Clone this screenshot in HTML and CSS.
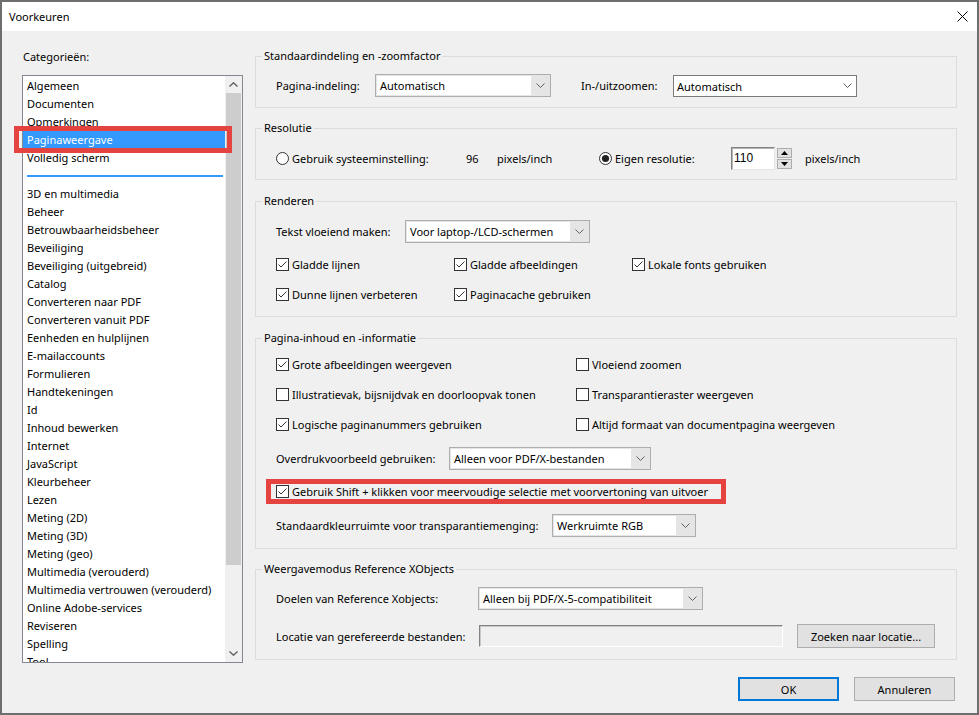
FILE: index.html
```html
<!DOCTYPE html>
<html lang="nl">
<head>
  <meta charset="UTF-8">
  <title>Voorkeuren</title>
  <link rel="stylesheet" href="styles.css">
</head>
<body>
  <div class="window">
    <div class="titlebar">
      <span>Voorkeuren</span>
      <svg class="close" width="11" height="11" viewBox="0 0 11 11"><path d="M0.5 0.5L10.5 10.5M10.5 0.5L0.5 10.5" stroke="#000" stroke-width="1"/></svg>
    </div>

    <div class="content">
      <div class="main">
        <div class="sidebar">
          <div class="cat-label">Categorieën:</div>
          <div class="listbox">
            <ul class="items">
              <li>Algemeen</li>
              <li>Documenten</li>
              <li>Opmerkingen</li>
              <li class="selected">Paginaweergave</li>
              <li>Volledig scherm</li>
              <li class="sep"><span></span></li>
              <li>3D en multimedia</li>
              <li>Beheer</li>
              <li>Betrouwbaarheidsbeheer</li>
              <li>Beveiliging</li>
              <li>Beveiliging (uitgebreid)</li>
              <li>Catalog</li>
              <li>Converteren naar PDF</li>
              <li>Converteren vanuit PDF</li>
              <li>Eenheden en hulplijnen</li>
              <li>E-mailaccounts</li>
              <li>Formulieren</li>
              <li>Handtekeningen</li>
              <li>Id</li>
              <li>Inhoud bewerken</li>
              <li>Internet</li>
              <li>JavaScript</li>
              <li>Kleurbeheer</li>
              <li>Lezen</li>
              <li>Meting (2D)</li>
              <li>Meting (3D)</li>
              <li>Meting (geo)</li>
              <li>Multimedia (verouderd)</li>
              <li>Multimedia vertrouwen (verouderd)</li>
              <li>Online Adobe-services</li>
              <li>Reviseren</li>
              <li>Spelling</li>
              <li>Tool</li>
            </ul>
            <div class="scrollbar">
              <div class="sb-btn"><svg width="9" height="5" viewBox="0 0 9 5"><path d="M0.5 4.5L4.5 0.8L8.5 4.5" fill="none" stroke="#606060" stroke-width="1.4"/></svg></div>
              <div class="sb-thumb"></div>
              <div class="sb-track"></div>
              <div class="sb-btn"><svg width="9" height="5" viewBox="0 0 9 5"><path d="M0.5 0.5L4.5 4.2L8.5 0.5" fill="none" stroke="#606060" stroke-width="1.4"/></svg></div>
            </div>
          </div>
          <div class="callout callout-cat"></div>
        </div>

        <div class="panels">
          <fieldset class="g1">
            <legend>Standaardindeling en -zoomfactor</legend>
            <div class="fs-body">
              <div class="row">
                <span class="lbl-page">Pagina-indeling:</span>
                <div class="sel sel-page"><span class="val">Automatisch</span><span class="arr"><svg width="9" height="5" viewBox="0 0 9 5"><path d="M0.5 0.5L4.5 4.5L8.5 0.5" fill="none" stroke="#606060"/></svg></span></div>
                <span class="lbl-zoom">In-/uitzoomen:</span>
                <div class="combo sel-zoom"><span class="val">Automatisch</span><span class="arr"><svg width="9" height="5" viewBox="0 0 9 5"><path d="M0.5 0.5L4.5 4.5L8.5 0.5" fill="none" stroke="#606060"/></svg></span></div>
              </div>
            </div>
          </fieldset>

          <fieldset class="g2">
            <legend>Resolutie</legend>
            <div class="fs-body">
              <div class="row">
                <span class="radio r-sys"><svg width="13" height="13" viewBox="0 0 13 13"><circle cx="6.5" cy="6.5" r="6" fill="#fff" stroke="#333"/></svg>Gebruik systeeminstelling:</span>
                <span class="dpi-val">96</span>
                <span class="dpi-unit">pixels/inch</span>
                <span class="radio r-own"><svg width="13" height="13" viewBox="0 0 13 13"><circle cx="6.5" cy="6.5" r="6" fill="#fff" stroke="#333"/><circle cx="6.5" cy="6.5" r="3.6" fill="#222"/></svg>Eigen resolutie:</span>
                <span class="num-input">110</span>
                <span class="spinner">
                  <span class="spin"><svg width="7" height="4" viewBox="0 0 7 4"><path d="M0 4L3.5 0L7 4Z" fill="#000"/></svg></span>
                  <span class="spin"><svg width="7" height="4" viewBox="0 0 7 4"><path d="M0 0L3.5 4L7 0Z" fill="#000"/></svg></span>
                </span>
                <span class="dpi-unit2">pixels/inch</span>
              </div>
            </div>
          </fieldset>

          <fieldset class="g3">
            <legend>Renderen</legend>
            <div class="fs-body">
              <div class="row">
                <span class="lbl-smooth">Tekst vloeiend maken:</span>
                <div class="sel sel-smooth"><span class="val">Voor laptop-/LCD-schermen</span><span class="arr"><svg width="9" height="5" viewBox="0 0 9 5"><path d="M0.5 0.5L4.5 4.5L8.5 0.5" fill="none" stroke="#606060"/></svg></span></div>
              </div>
              <div class="row cb-row">
                <span class="check col3"><svg class="box" width="13" height="13" viewBox="0 0 13 13"><rect x="0.5" y="0.5" width="12" height="12" fill="#fff" stroke="#333"/><path d="M2.5 6.5L5 9L10.5 3.5" fill="none" stroke="#333"/></svg>Gladde lijnen</span>
                <span class="check col3"><svg class="box" width="13" height="13" viewBox="0 0 13 13"><rect x="0.5" y="0.5" width="12" height="12" fill="#fff" stroke="#333"/><path d="M2.5 6.5L5 9L10.5 3.5" fill="none" stroke="#333"/></svg>Gladde afbeeldingen</span>
                <span class="check col3"><svg class="box" width="13" height="13" viewBox="0 0 13 13"><rect x="0.5" y="0.5" width="12" height="12" fill="#fff" stroke="#333"/><path d="M2.5 6.5L5 9L10.5 3.5" fill="none" stroke="#333"/></svg>Lokale fonts gebruiken</span>
              </div>
              <div class="row cb-row">
                <span class="check col3"><svg class="box" width="13" height="13" viewBox="0 0 13 13"><rect x="0.5" y="0.5" width="12" height="12" fill="#fff" stroke="#333"/><path d="M2.5 6.5L5 9L10.5 3.5" fill="none" stroke="#333"/></svg>Dunne lijnen verbeteren</span>
                <span class="check col3"><svg class="box" width="13" height="13" viewBox="0 0 13 13"><rect x="0.5" y="0.5" width="12" height="12" fill="#fff" stroke="#333"/><path d="M2.5 6.5L5 9L10.5 3.5" fill="none" stroke="#333"/></svg>Paginacache gebruiken</span>
              </div>
            </div>
          </fieldset>

          <fieldset class="g4">
            <legend>Pagina-inhoud en -informatie</legend>
            <div class="fs-body">
              <div class="row cb-row">
                <span class="check col2"><svg class="box" width="13" height="13" viewBox="0 0 13 13"><rect x="0.5" y="0.5" width="12" height="12" fill="#fff" stroke="#333"/><path d="M2.5 6.5L5 9L10.5 3.5" fill="none" stroke="#333"/></svg>Grote afbeeldingen weergeven</span>
                <span class="check col2"><svg class="box" width="13" height="13" viewBox="0 0 13 13"><rect x="0.5" y="0.5" width="12" height="12" fill="#fff" stroke="#333"/></svg>Vloeiend zoomen</span>
              </div>
              <div class="row cb-row">
                <span class="check col2"><svg class="box" width="13" height="13" viewBox="0 0 13 13"><rect x="0.5" y="0.5" width="12" height="12" fill="#fff" stroke="#333"/></svg>Illustratievak, bijsnijdvak en doorloopvak tonen</span>
                <span class="check col2"><svg class="box" width="13" height="13" viewBox="0 0 13 13"><rect x="0.5" y="0.5" width="12" height="12" fill="#fff" stroke="#333"/></svg>Transparantieraster weergeven</span>
              </div>
              <div class="row cb-row">
                <span class="check col2"><svg class="box" width="13" height="13" viewBox="0 0 13 13"><rect x="0.5" y="0.5" width="12" height="12" fill="#fff" stroke="#333"/><path d="M2.5 6.5L5 9L10.5 3.5" fill="none" stroke="#333"/></svg>Logische paginanummers gebruiken</span>
                <span class="check col2"><svg class="box" width="13" height="13" viewBox="0 0 13 13"><rect x="0.5" y="0.5" width="12" height="12" fill="#fff" stroke="#333"/></svg>Altijd formaat van documentpagina weergeven</span>
              </div>
              <div class="row">
                <span class="lbl-overprint">Overdrukvoorbeeld gebruiken:</span>
                <div class="sel sel-overprint"><span class="val">Alleen voor PDF/X-bestanden</span><span class="arr"><svg width="9" height="5" viewBox="0 0 9 5"><path d="M0.5 0.5L4.5 4.5L8.5 0.5" fill="none" stroke="#606060"/></svg></span></div>
              </div>
              <div class="row cb-row callout-row">
                <span class="check"><svg class="box" width="13" height="13" viewBox="0 0 13 13"><rect x="0.5" y="0.5" width="12" height="12" fill="#fff" stroke="#333"/><path d="M2.5 6.5L5 9L10.5 3.5" fill="none" stroke="#333"/></svg>Gebruik Shift + klikken voor meervoudige selectie met voorvertoning van uitvoer</span>
                <div class="callout callout-shift"></div>
              </div>
              <div class="row">
                <span class="lbl-blend">Standaardkleurruimte voor transparantiemenging:</span>
                <div class="sel sel-blend"><span class="val">Werkruimte RGB</span><span class="arr"><svg width="9" height="5" viewBox="0 0 9 5"><path d="M0.5 0.5L4.5 4.5L8.5 0.5" fill="none" stroke="#606060"/></svg></span></div>
              </div>
            </div>
          </fieldset>

          <fieldset class="g5">
            <legend>Weergavemodus Reference XObjects</legend>
            <div class="fs-body">
              <div class="row">
                <span class="lbl-xobj">Doelen van Reference Xobjects:</span>
                <div class="sel sel-xobj"><span class="val">Alleen bij PDF/X-5-compatibiliteit</span><span class="arr"><svg width="9" height="5" viewBox="0 0 9 5"><path d="M0.5 0.5L4.5 4.5L8.5 0.5" fill="none" stroke="#606060"/></svg></span></div>
              </div>
              <div class="row row-btn">
                <span class="lbl-loc">Locatie van gerefereerde bestanden:</span>
                <span class="path-input"></span>
                <button class="btn btn-browse">Zoeken naar locatie...</button>
              </div>
            </div>
          </fieldset>
        </div>
      </div>

      <div class="footer">
        <button class="btn btn-ok">OK</button>
        <button class="btn btn-cancel">Annuleren</button>
      </div>
    </div>
  </div>
</body>
</html>
```

FILE: styles.css
```css
* { box-sizing: border-box; }
html, body { margin: 0; }
body {
  font: 11px/15px "Noto Sans", "Segoe UI", sans-serif;
  color: #000;
  background: #fff;
}
.window {
  width: 979px;
  height: 715px;
  border: 2px solid #6e6e6e;
  background: #f0f0f0;
  display: flex;
  flex-direction: column;
}
.titlebar {
  height: 29px;
  background: #fff;
  display: flex;
  align-items: center;
  justify-content: space-between;
  padding: 0 9px 0 7px;
}

.content {
  flex: 1;
  padding: 18px 20px 0 20px;
  display: flex;
  flex-direction: column;
}
.main { display: flex; gap: 12px; }

/* categories */
.sidebar { width: 221px; position: relative; }
.cat-label { height: 15px; margin-bottom: 11px; padding-left: 1px; }
.listbox {
  height: 588px;
  border: 1px solid #828790;
  background: #fff;
  display: flex;
  overflow: hidden;
}
.items {
  list-style: none;
  margin: 0;
  padding: 1px 0 0 0;
  flex: 1;
  overflow: hidden;
}
.items li {
  height: 18px;
  line-height: 18px;
  padding-left: 4px;
  white-space: nowrap;
}
.items li.selected { background: #3399ff; color: #fff; }
.items li.sep { display: flex; align-items: center; padding: 0 2px 0 4px; }
.items li.sep span { flex: 1; height: 2px; background: #3399ff; }
.scrollbar {
  width: 17px;
  display: flex;
  flex-direction: column;
  background: #f0f0f0;
}
.sb-btn { height: 17px; display: flex; align-items: center; justify-content: center; }
.sb-thumb { height: 472px; margin: 0 1px; background: #cdcdcd; }
.sb-track { flex: 1; }

.callout { position: absolute; border: 5px solid #e5433f; }
.callout-cat { left: -8px; top: 77px; width: 218px; height: 27px; }

/* group boxes */
.panels { width: 702px; display: flex; flex-direction: column; }
fieldset {
  margin: 0;
  padding: 0;
  border: 1px solid #dcdcdc;
  min-width: 0;
}
legend { margin-left: 6px; padding: 0 2px; line-height: 14px; }
.fs-body { padding-left: 20px; display: flex; flex-direction: column; gap: 14px; }
.g1 .fs-body { padding-top: 11px; padding-bottom: 10px; }
.g2 { margin-top: 13px; }
.g2 .fs-body { padding-top: 12px; padding-bottom: 9px; }
.g3 { margin-top: 14px; }
.g3 .fs-body { padding-top: 12px; padding-bottom: 13px; }
.g4 { margin-top: 14px; }
.g4 .fs-body { padding-top: 12px; padding-bottom: 11px; }
.g5 { margin-top: 13px; }
.g5 .fs-body { padding-top: 11px; padding-bottom: 11px; }

.row { display: flex; align-items: center; height: 23px; white-space: nowrap; }
.cb-row { height: 16px; }
.row-btn { height: 24px; }
.callout-row { position: relative; }
.callout-shift { left: -10px; top: -5px; width: 460px; height: 25px; }

.check { display: flex; align-items: center; padding-bottom: 2px; }
.check .box { margin-right: 3px; flex: none; }
.col3 { width: 178px; }
.col2 { width: 300px; }

.radio { display: flex; align-items: center; }
.radio svg { margin-right: 3px; }
.r-sys { width: 190px; }
.dpi-val { width: 31px; }
.dpi-unit { width: 102px; }
.r-own { width: 132px; }
.num-input {
  width: 44px;
  height: 23px;
  background: #fff;
  border: 1px solid;
  border-color: #828282 #e3e3e3 #e3e3e3 #828282;
  box-shadow: inset 1px 1px 0 #b4b4b4;
  padding: 3px 0 0 2px;
  font-family: "Liberation Sans", Arial, sans-serif;
  font-size: 12px;
  line-height: 15px;
}
.spinner {
  width: 15px;
  height: 23px;
  margin-left: 2px;
  display: flex;
  flex-direction: column;
  justify-content: space-between;
  padding: 1px 0;
}
.spin {
  height: 10px;
  background: #e1e1e1;
  border: 1px solid #adadad;
  display: flex;
  align-items: center;
  justify-content: center;
}
.dpi-unit2 { margin-left: 13px; }

/* dropdowns */
.sel, .combo {
  height: 23px;
  display: flex;
  border: 1px solid #adadad;
  background: #e5e5e5;
}
.sel .val {
  flex: 1;
  background: #fff;
  margin: 1px 0 1px 1px;
  padding-left: 3px;
  line-height: 19px;
}
.arr { width: 19px; display: flex; align-items: center; justify-content: center; }
.combo { border-color: #7a7a7a; background: #fff; }
.combo .val { flex: 1; padding-left: 3px; line-height: 21px; }
.combo .arr { width: 17px; }

.lbl-page { width: 99px; }
.sel-page { width: 176px; }
.lbl-zoom { width: 92px; margin-left: 30px; }
.sel-zoom { width: 184px; height: 22px; }
.lbl-smooth { width: 129px; }
.sel-smooth { width: 185px; }
.lbl-overprint { width: 173px; }
.sel-overprint { width: 202px; }
.lbl-blend { width: 276px; }
.sel-blend { width: 144px; }
.lbl-xobj { width: 202px; }
.sel-xobj { width: 225px; }
.lbl-loc { width: 203px; }
.path-input {
  width: 304px;
  height: 22px;
  border: 1px solid;
  border-color: #828282 #fff #fff #828282;
  box-shadow: inset 1px 1px 0 #c8c8c8;
}

/* buttons */
.btn {
  font: inherit;
  color: #000;
  height: 24px;
  background: #e1e1e1;
  border: 1px solid #adadad;
  padding: 0;
}
.btn-browse { width: 138px; margin-left: 14px; }
.footer {
  margin-top: 14px;
  display: flex;
  justify-content: flex-end;
  gap: 15px;
  padding-right: 2px;
}
.btn-ok { width: 101px; border: 2px solid #0078d7; }
.btn-cancel { width: 101px; }
```
